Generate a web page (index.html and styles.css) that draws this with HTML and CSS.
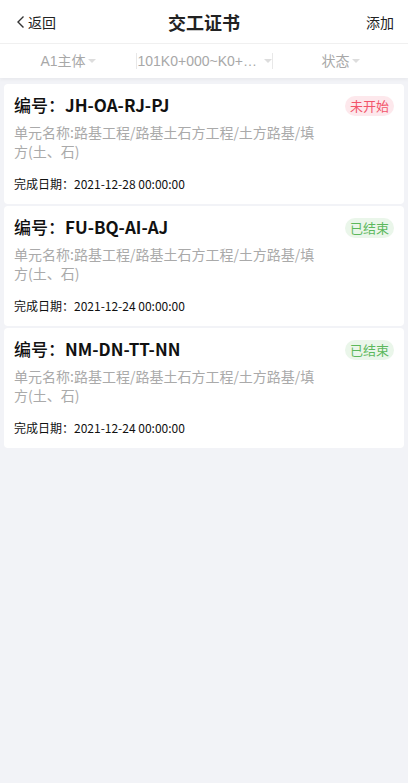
FILE: index.html
```html
<!DOCTYPE html>
<html lang="zh">
<head>
<meta charset="utf-8">
<link rel="stylesheet" href="styles.css">
</head>
<body>
<header class="nav">
  <div class="nav-left">
    <svg class="chev" width="10" height="14" viewBox="0 0 10 14"><path d="M7.5 1.5 L2 7 L7.5 12.5" fill="none" stroke="#333" stroke-width="1.4"/></svg>
    <span>返回</span>
  </div>
  <div class="nav-title">交工证书</div>
  <div class="nav-right">添加</div>
</header>
<div class="filters">
  <div class="filter"><span class="ftext">A1主体</span><span class="tri"></span></div>
  <div class="filter sep"><span class="ftext ell">101K0+000~K0+000</span><span class="tri"></span></div>
  <div class="filter sep"><span class="ftext">状态</span><span class="tri"></span></div>
</div>
<main class="list">
  <div class="card">
    <div class="card-head">
      <div class="code"><span class="code-label">编号：</span>JH-OA-RJ-PJ</div>
      <span class="badge pending">未开始</span>
    </div>
    <div class="unit">单元名称:路基工程/路基土石方工程/土方路基/填方(土、石)</div>
    <div class="date">完成日期：2021-12-28 00:00:00</div>
  </div>
  <div class="card">
    <div class="card-head">
      <div class="code"><span class="code-label">编号：</span>FU-BQ-AI-AJ</div>
      <span class="badge done">已结束</span>
    </div>
    <div class="unit">单元名称:路基工程/路基土石方工程/土方路基/填方(土、石)</div>
    <div class="date">完成日期：2021-12-24 00:00:00</div>
  </div>
  <div class="card">
    <div class="card-head">
      <div class="code"><span class="code-label">编号：</span>NM-DN-TT-NN</div>
      <span class="badge done">已结束</span>
    </div>
    <div class="unit">单元名称:路基工程/路基土石方工程/土方路基/填方(土、石)</div>
    <div class="date">完成日期：2021-12-24 00:00:00</div>
  </div>
</main>
</body>
</html>
```
FILE: styles.css
```css
* { box-sizing: border-box; }
html, body { margin: 0; padding: 0; }
body {
  background: #f2f3f7;
  font-family: "Noto Sans CJK SC", "Noto Sans", sans-serif;
  color: #222;
  width: 408px;
  min-height: 783px;
}
.nav {
  height: 44px;
  background: #fff;
  display: flex;
  align-items: center;
  justify-content: space-between;
  padding: 0 14px 0 16px;
  border-bottom: 1px solid #f0f0f0;
  position: relative;
}
.nav-left {
  display: flex;
  align-items: center;
  font-size: 14px;
  color: #222;
  gap: 2px;
}
.chev { display: block; }
.nav-title {
  position: absolute;
  left: 0; right: 0;
  text-align: center;
  font-size: 18px;
  font-weight: 700;
  color: #222;
  pointer-events: none;
}
.nav-right { font-size: 14px; color: #222; }
.filters {
  height: 34px;
  background: #fff;
  display: grid;
  grid-template-columns: 136px 136px 136px;
  align-items: center;
  box-shadow: 0 2px 3px rgba(0,0,0,0.04);
}
.filter {
  display: flex;
  align-items: center;
  justify-content: center;
  height: 16px;
  color: #a8a8a8;
  font-size: 14px;
  gap: 2px;
  font-family: "Liberation Sans", "Noto Sans CJK SC", sans-serif;
}
.filter.sep { border-left: 1px solid #e8e8e8; }
.ftext { line-height: 16px; }
.ell {
  max-width: 124px;
  overflow: hidden;
  white-space: nowrap;
  text-overflow: ellipsis;
}
.tri {
  width: 0; height: 0;
  border-left: 4px solid transparent;
  border-right: 4px solid transparent;
  border-top: 4px solid #ddd;
}
.list {
  padding: 6px 4px;
  display: flex;
  flex-direction: column;
  gap: 2px;
}
.card {
  background: #fff;
  border-radius: 4px;
  height: 120px;
  padding: 8px 10px 0 10px;
}
.card-head {
  display: flex;
  justify-content: space-between;
  align-items: center;
  height: 24px;
}
.code {
  font-size: 17px;
  font-weight: 700;
  color: #111;
}
.code-label { font-weight: 500; }
.badge {
  align-self: flex-start;
  font-size: 13px;
  height: 20px;
  line-height: 20px;
  padding: 0 5px;
  border-radius: 10px;
  margin-top: 4px;
}
.badge.pending { background: #fde8ec; color: #f2556a; }
.badge.done { background: #eaf6ea; color: #5cb85c; }
.unit {
  margin-top: 7px;
  width: 302px;
  font-size: 14px;
  line-height: 19px;
  color: #aaa;
}
.date {
  margin-top: 14px;
  font-size: 12px;
  color: #111;
}
```
